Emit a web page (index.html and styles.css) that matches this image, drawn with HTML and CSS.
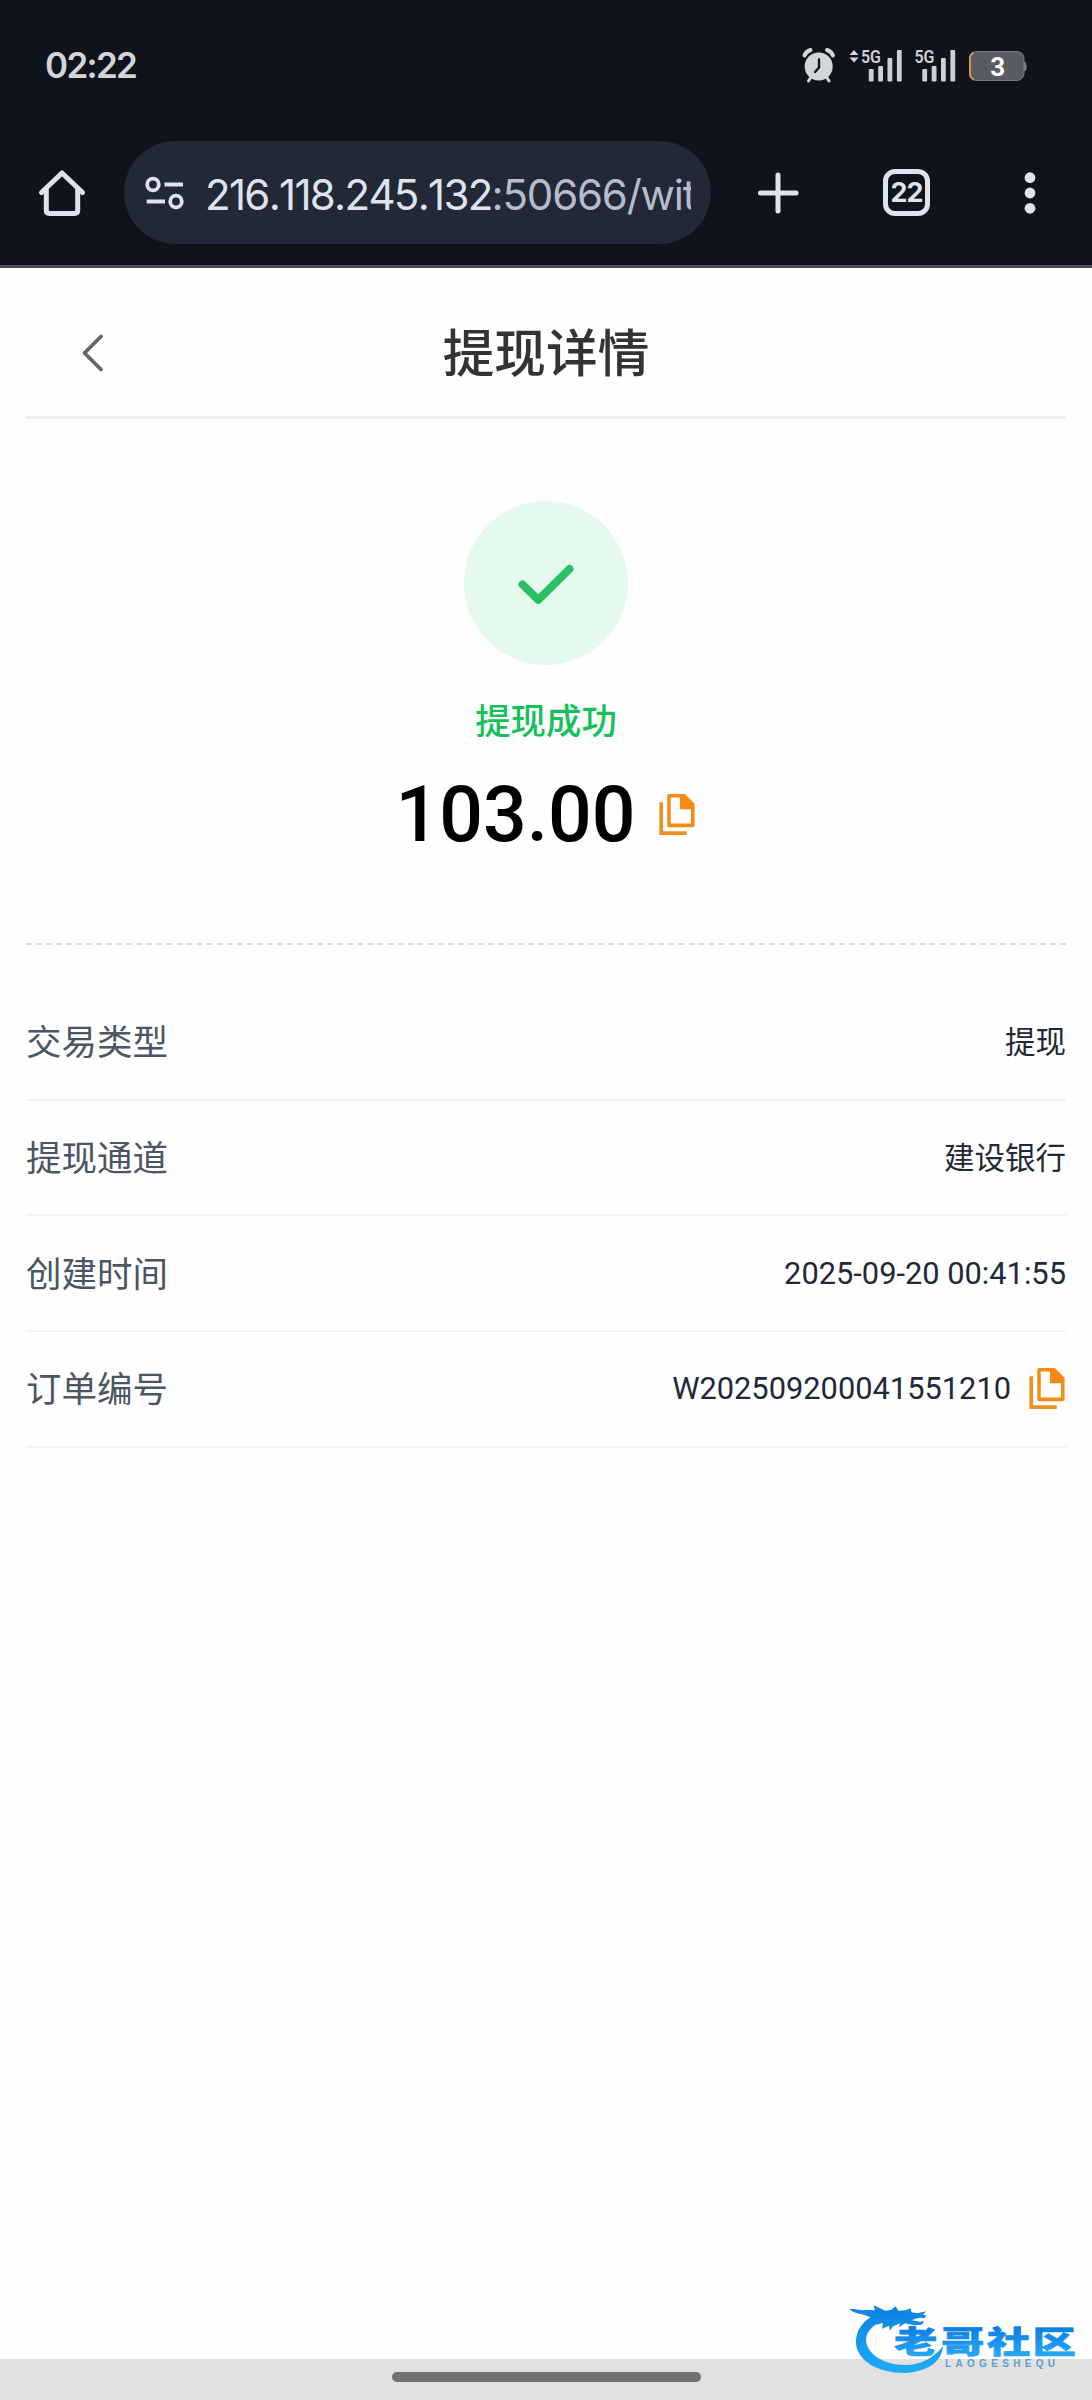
FILE: index.html
```html
<!DOCTYPE html>
<html lang="zh-CN">
<head>
<meta charset="utf-8">
<title>提现详情</title>
<link rel="stylesheet" href="styles.css">
</head>
<body>
<div class="screen">
  <header class="chrome">
    <div class="status-bar">
      <span class="clock">02:22</span>
      <svg class="status-icons" width="230" height="40" viewBox="800 45 230 40">
        <g fill="none" stroke="#d3d5d9" stroke-linecap="round">
          <path d="M804.5 55.500q1.500-4 6-5.500M833 55.500q-1.500-4-6-5.500" stroke-width="4"/>
          <path d="M811 77l-2.500 4M826.500 77l2.500 4" stroke-width="3"/>
        </g>
        <circle cx="818.700" cy="66.500" r="14" fill="#d3d5d9"/>
        <path d="M819 59.500v8l-4 4.500" fill="none" stroke="#10141d" stroke-width="2.400" stroke-linecap="round"/>
        <path d="M849.500 55l4.500-5 4.500 5zM849.500 57.500l4.500 5 4.500-5z" fill="#d3d5d9"/>
        <g fill="#cdd0d5">
          <text class="network" x="861" y="63" textLength="20" lengthAdjust="spacingAndGlyphs">5G</text>
          <text class="network" x="914.500" y="63" textLength="20" lengthAdjust="spacingAndGlyphs">5G</text>
          <rect x="868.800" y="69" width="4.800" height="12.500" rx="1"/>
          <rect x="878.200" y="66" width="4.800" height="15.500" rx="1"/>
          <rect x="887.500" y="58" width="4.800" height="23.500" rx="1"/>
          <rect x="896.900" y="50" width="4.800" height="31.500" rx="1"/>
          <rect x="922.300" y="69" width="4.800" height="12.500" rx="1"/>
          <rect x="931.700" y="66" width="4.800" height="15.500" rx="1"/>
          <rect x="941" y="58" width="4.800" height="23.500" rx="1"/>
          <rect x="950.400" y="50" width="4.800" height="31.500" rx="1"/>
        </g>
        <path d="M1024 61.500q2.700.5 2.700 5t-2.700 5z" fill="#777a80"/>
        <rect x="969.500" y="51.500" width="54.500" height="29" rx="7" fill="#585b63" stroke="#777a80"/>
        <path d="M973.500 52.500q-3.500 2-3.500 6v15q0 4 3.500 6" fill="none" stroke="#d2a04a" stroke-width="1.800"/>
        <text class="battery-level" x="997.700" y="75.500" text-anchor="middle">3</text>
      </svg>
    </div>
    <div class="toolbar">
      <svg class="home" width="50" height="50" viewBox="37 168 50 50" fill="none" stroke="#dfe3f0" stroke-width="5" stroke-linejoin="round" stroke-linecap="round">
        <path d="M41.500 192.500L62 173 82.500 192.500"/><path d="M46.300 190v20.300q0 3.200 3.200 3.200h25q3.200 0 3.200-3.200V190"/>
      </svg>
      <div class="address">
        <svg class="site-info" width="40" height="34" viewBox="145 176 40 34" fill="none" stroke="#dfe3f0" stroke-width="3.800">
          <circle cx="153" cy="184.500" r="5.800"/><path d="M164.500 184.500H183M146.700 201.500H165"/><circle cx="176" cy="201.500" r="5.800"/>
        </svg>
        <div class="url"><span class="host">216.118.245.132</span><span class="path">:50666/wit</span></div>
      </div>
      <svg class="plus" width="42" height="44" viewBox="757 175 42 44" stroke="#dfe3f0" stroke-width="5" stroke-linecap="round">
        <path d="M778 179v36M760.500 197h35.500"/>
      </svg>
      <div class="tabs">22</div>
      <svg class="more" width="12" height="44" viewBox="0 0 12 44" fill="#dfe3f0">
        <circle cx="6" cy="6.700" r="5.400"/><circle cx="6" cy="22" r="5.400"/><circle cx="6" cy="37.300" r="5.400"/>
      </svg>
    </div>
  </header>

  <main class="page">
    <div class="title-bar">
      <svg class="back" width="24" height="42" viewBox="0 0 24 42" fill="none" stroke="#666" stroke-width="3.800" stroke-linecap="round" stroke-linejoin="round">
        <path d="M20 4.500L3.500 21 20 37.500"/>
      </svg>
      <h1 class="title">提现详情</h1>
    </div>

    <section class="result">
      <div class="badge">
        <svg width="164" height="164" viewBox="0 0 164 164" fill="none" stroke="#28c062" stroke-width="8" stroke-linecap="round" stroke-linejoin="round">
          <path d="M58.500 83.500l15.800 15.300L105.500 68"/>
        </svg>
      </div>
      <p class="state">提现成功</p>
      <div class="amount-row">
        <span class="amount">103.00</span>
        <svg class="copy" viewBox="0 0 36 42">
          <path d="M1.800 8.500v31.500H28" fill="none" stroke="#ed9124" stroke-width="3.800"/>
          <path fill-rule="evenodd" fill="#f58b12" d="M10 0h16l10 10v22a2 2 0 0 1-2 2H10a2 2 0 0 1-2-2V2a2 2 0 0 1 2-2zM11.600 3.700v26.600h20.800V15.500H21V3.700z"/>
        </svg>
      </div>
    </section>

    <dl class="details">
      <div class="row"><dt>交易类型</dt><dd>提现</dd></div>
      <div class="row"><dt>提现通道</dt><dd>建设银行</dd></div>
      <div class="row"><dt>创建时间</dt><dd class="latin">2025-09-20 00:41:55</dd></div>
      <div class="row"><dt>订单编号</dt><dd class="latin order"><span>W202509200041551210</span>
        <svg class="copy" viewBox="0 0 36 42">
          <path d="M1.800 8.500v31.500H28" fill="none" stroke="#ed9124" stroke-width="3.800"/>
          <path fill-rule="evenodd" fill="#f58b12" d="M10 0h16l10 10v22a2 2 0 0 1-2 2H10a2 2 0 0 1-2-2V2a2 2 0 0 1 2-2zM11.600 3.700v26.600h20.800V15.500H21V3.700z"/>
        </svg></dd></div>
    </dl>
  </main>

  <footer class="gesture-bar"><div class="handle"></div></footer>

  <svg class="watermark" width="232" height="80" viewBox="850 2300 232 80">
    <defs>
      <linearGradient id="sea" x1="0" y1="2305" x2="0" y2="2373" gradientUnits="userSpaceOnUse"><stop offset="0" stop-color="#0b80e2"/><stop offset="1" stop-color="#20adf8"/></linearGradient>
      <linearGradient id="ink" x1="0" y1="0" x2="0" y2="1"><stop offset="0.200" stop-color="#0b7ce2"/><stop offset="0.900" stop-color="#28aaf6"/></linearGradient>
    </defs>
    <g fill="url(#sea)">
      <path d="M879 2313C863 2319 855 2331 856 2344C858 2361 878 2373 904 2373C927 2372 942 2362 943 2346C935 2357 921 2365 906 2365C883 2365 867 2354 866 2340C866 2331 874 2323 889 2319Z"/>
      <path d="M854 2309q6 1.500 11 1 5-.2 10 .3l-1.500-5 12 5.500 6-1 4-3.500 3 4.500 7-.5 5-2 1 4 6 1 8.500-2-3 3.500 3 .5-1 3q-7-2-13 2l8 1.500 4-1-2 4-8 .5-9-2-6 4 1-4-7 3-3 4.500-1-5-7 3 1-6-6 2-2-6q-8-3-12-4.300-9-1.200-14-5.500z"/>
    </g>
    <text class="brand" fill="url(#ink)" stroke="url(#ink)" stroke-width="0.600" transform="translate(894 2353) scale(1.400 1)" x="0 33.500 66.500 99" y="0">老哥社区</text>
    <text class="brand-latin" x="945" y="2366.500" textLength="110">LAOGESHEQU</text>
  </svg>
</div>
</body>
</html>
```
FILE: styles.css
```css
* { box-sizing: border-box; }
body { margin: 0; background: #fefefe; font-family: Roboto, "Noto Sans CJK SC", sans-serif; }
h1, p, dl, dd { margin: 0; }
svg { display: block; flex: none; }

.screen { position: relative; display: flex; flex-direction: column; width: 1092px; height: 2400px; overflow: hidden; }

.chrome { height: 268px; flex: none; background: #0f131c; border-bottom: 3px solid #4a4b55; }
.status-bar { display: flex; justify-content: space-between; align-items: center; height: 130px; padding: 0 62px 0 45px; }
.clock { font: 600 35px/40px Inter, sans-serif; letter-spacing: -1.7px; color: #d3d5d9; }
.network { font: 600 18px Roboto, sans-serif; }
.battery-level { font: 700 26px Roboto, sans-serif; fill: #fff; }

.toolbar { display: flex; align-items: center; height: 125px; padding-left: 37px; }
.address { display: flex; align-items: center; width: 587px; height: 103px; margin-left: 37px; padding-left: 21px; border-radius: 52px; background: #222835; }
.url { display: flex; width: 486px; margin-left: 20px; margin-top: 4px; overflow: hidden; white-space: nowrap; font: 400 42px/60px Inter, sans-serif; font-kerning: none; letter-spacing: -1.700px; color: #dfe3f0; }
.path { letter-spacing: -1.200px; color: #b5bccd; }
.plus { margin-left: 46px; }
.tabs { display: flex; align-items: center; justify-content: center; width: 47px; height: 47px; margin-left: 84px; border: 5px solid #dfe3f0; border-radius: 12px; color: #dfe3f0; font: 700 27px/36px Inter, sans-serif; letter-spacing: -1px; }
.more { margin-left: 94px; }

.page { flex: 1; padding: 0 26px; }
.title-bar { display: grid; grid-template-columns: 130px 1fr 130px; align-items: center; height: 151px; border-bottom: 3px solid #eee; }
.back { margin-left: 55px; margin-top: 21px; }
.title { margin-top: 25px; text-align: center; font-size: 51.700px; line-height: 72px; font-weight: 500; color: #333; }

.result { display: flex; flex-direction: column; align-items: center; height: 526px; padding-top: 82px; border-bottom: 2px dashed #ddd; }
.badge { width: 164px; height: 164px; border-radius: 50%; background: #e6f9ed; }
.state { margin-top: 31px; font-size: 35.400px; line-height: 52px; font-weight: 500; color: #16c05a; }
.amount-row { display: flex; align-items: center; gap: 23px; margin-top: 21px; padding-right: 2px; }
.amount { position: relative; top: 1px; font-size: 77px; line-height: 90px; font-weight: 500; color: #000; }
.copy { width: 36px; height: 41px; }

.details { padding-top: 40px; }
.row { display: flex; align-items: center; justify-content: space-between; height: 115.700px; padding-bottom: 2px; border-bottom: 2px solid #f2f3f4; }
.row dt { padding-bottom: 2px; font-size: 35.500px; color: #4b5563; }
.row dd { padding-bottom: 2px; font-size: 30.500px; color: #1f2937; }
.row .latin { padding: 2px 0 0; font-size: 30.800px; }
.row .order { display: flex; align-items: center; gap: 18px; padding-right: 1px; }

.gesture-bar { height: 41px; flex: none; padding-top: 13px; background: #e1e1e1; }
.handle { width: 309px; height: 10px; margin: 0 auto; border-radius: 5px; background: #707070; }

.watermark { position: absolute; left: 850px; top: 2300px; }
.brand { font: 900 31px "Noto Sans CJK SC", sans-serif; }
.brand-latin { font: 700 10px "Liberation Sans", sans-serif; fill: #5c9fce; }
```
